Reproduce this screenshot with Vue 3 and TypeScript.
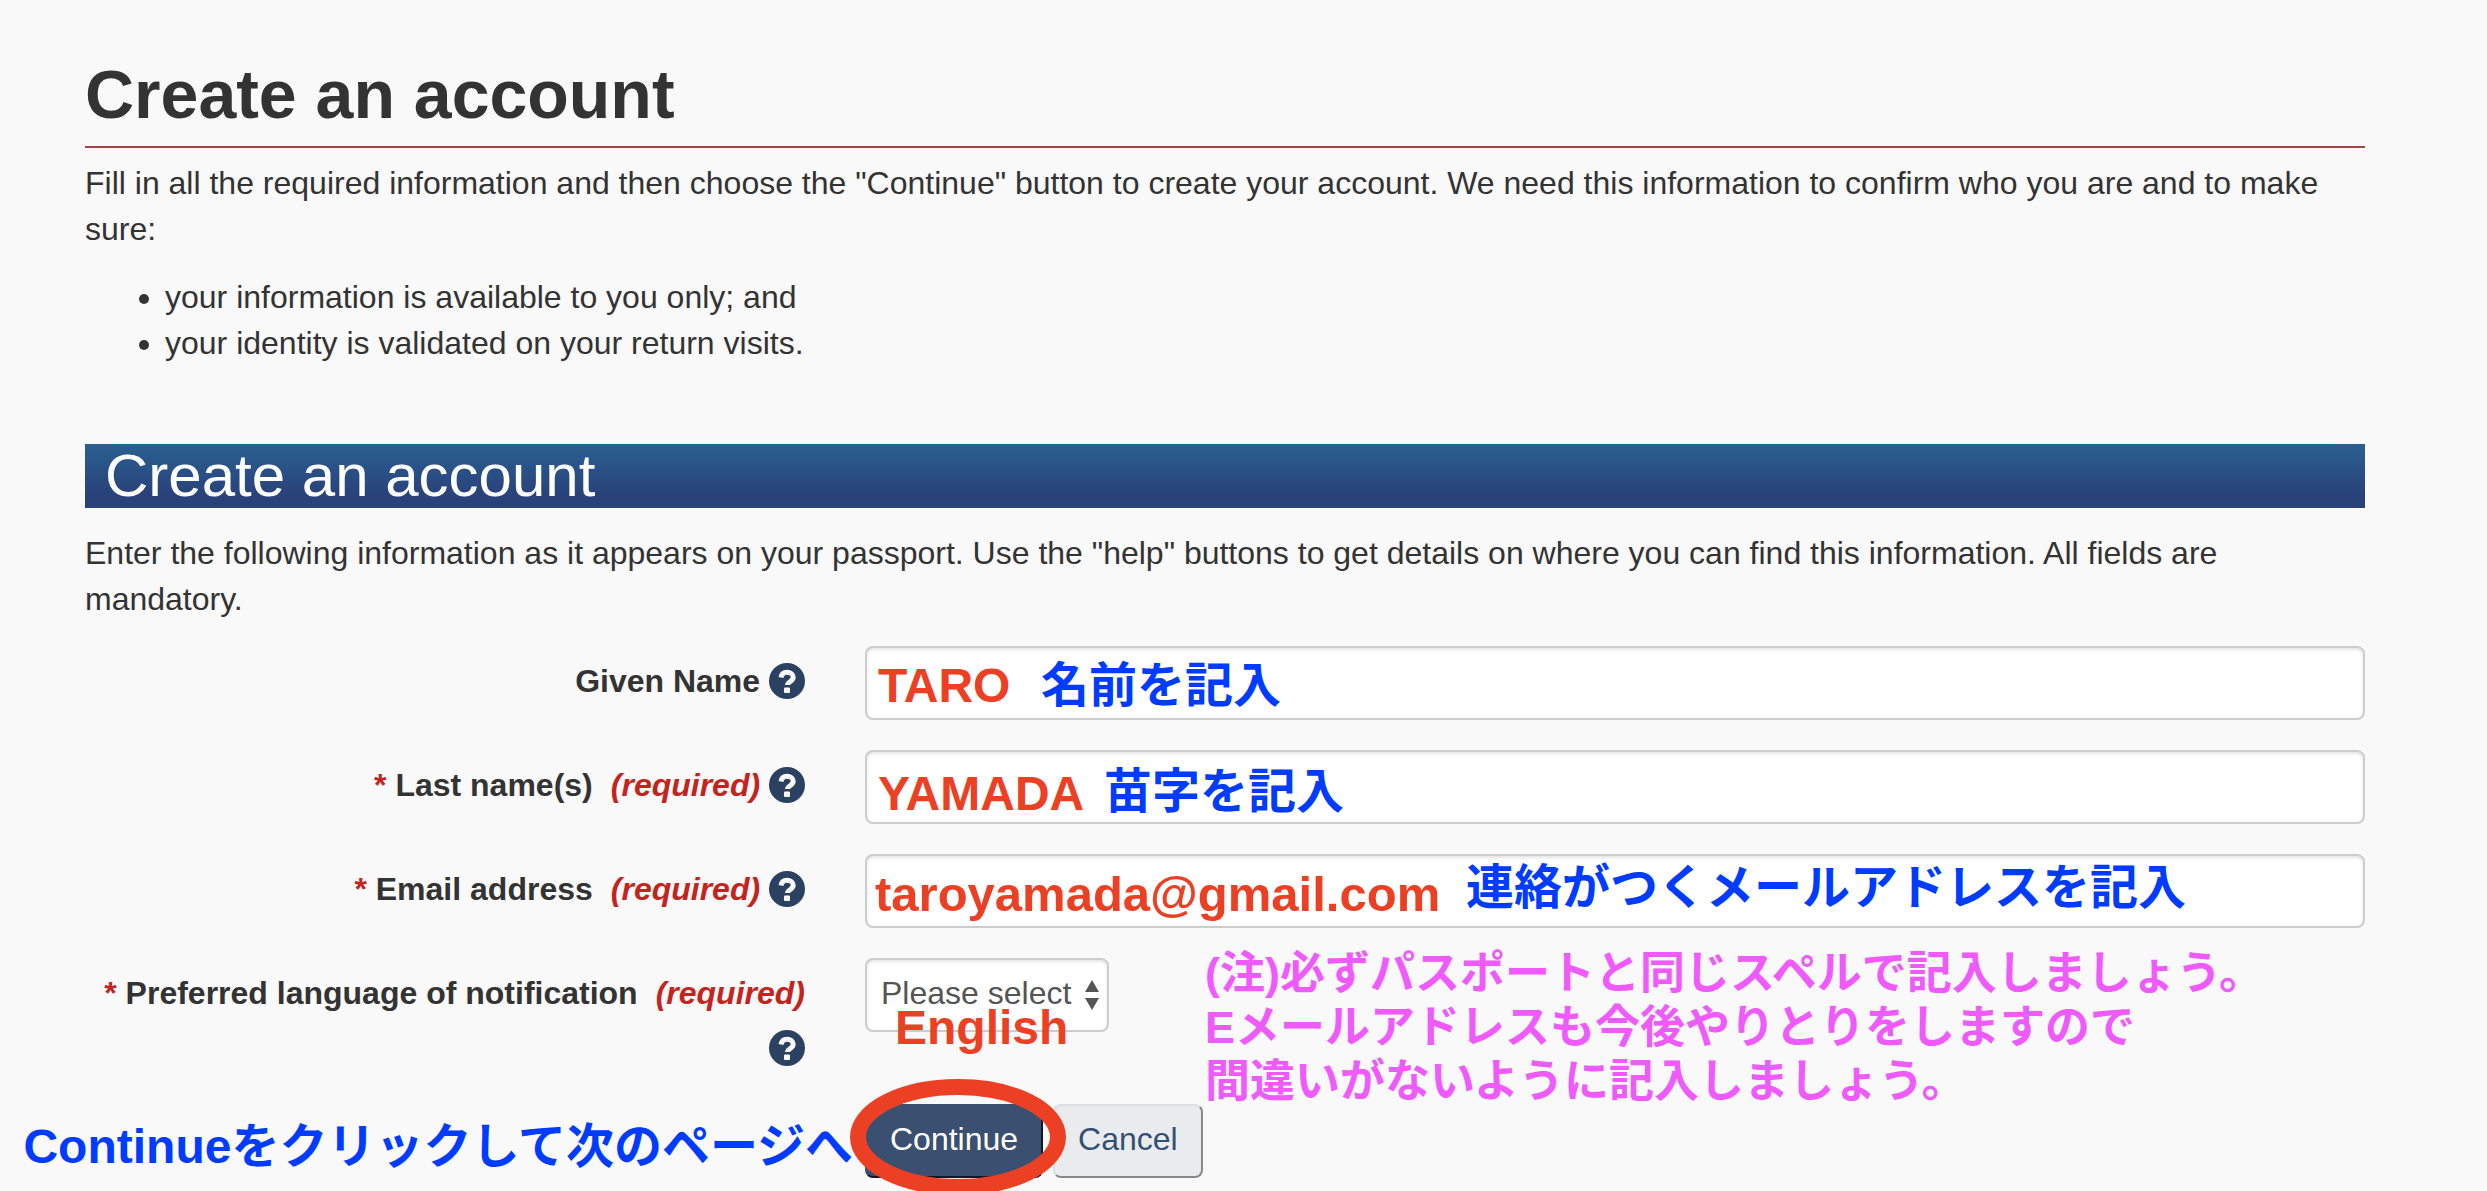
<script setup lang="ts">
import { ref } from 'vue'

interface Field {
  id: string
  label: string
  type: string
  required: boolean
  sample: string
  hint: string
}

const fields: Field[] = [
  { id: 'given', label: 'Given Name', type: 'text', required: false, sample: 'TARO', hint: '名前を記入' },
  { id: 'last', label: 'Last name(s)', type: 'text', required: true, sample: 'YAMADA', hint: '苗字を記入' },
  {
    id: 'email',
    label: 'Email address',
    type: 'email',
    required: true,
    sample: 'taroyamada@gmail.com',
    hint: '連絡がつくメールアドレスを記入',
  },
]

const language = ref('')
</script>

<template>
  <main class="page">
    <h1>Create an account</h1>
    <p class="intro">
      Fill in all the required information and then choose the "Continue" button to create your account. We need this
      information to confirm who you are and to make sure:
    </p>
    <ul class="reasons">
      <li>your information is available to you only; and</li>
      <li>your identity is validated on your return visits.</li>
    </ul>

    <h2>Create an account</h2>
    <p class="guide">
      Enter the following information as it appears on your passport. Use the "help" buttons to get details on where you
      can find this information. All fields are mandatory.
    </p>

    <form class="form" @submit.prevent>
      <div v-for="f in fields" :key="f.id" class="row">
        <div class="caption">
          <label :for="f.id"
            ><span v-if="f.required" class="star">* </span>{{ f.label
            }}<em v-if="f.required" class="required">(required)</em></label
          >&#32;<button type="button" class="help" :aria-label="'Help: ' + f.label">
            <svg viewBox="0 0 36 36" aria-hidden="true">
              <circle cx="18" cy="18" r="18" />
              <path d="M12 14.500c.6-3.600 3-5.300 6.100-5.300 3.400 0 6.100 2 6.100 5.100 0 4.500-5.700 4.300-5.700 7.700" />
              <rect x="15" y="24.500" width="6" height="5.500" rx="1" />
            </svg>
          </button>
        </div>
        <div class="control">
          <input :id="f.id" class="box" :type="f.type" />
          <span class="note sample" :class="'sample-' + f.id">{{ f.sample }}</span>
          <span class="note hint" :class="'hint-' + f.id">{{ f.hint }}</span>
        </div>
      </div>

      <div class="row">
        <div class="caption tall">
          <label for="language"
            ><span class="star">* </span>Preferred language of notification<em class="required">(required)</em></label
          >&#32;<button type="button" class="help" aria-label="Help: Preferred language of notification">
            <svg viewBox="0 0 36 36" aria-hidden="true">
              <circle cx="18" cy="18" r="18" />
              <path d="M12 14.500c.6-3.600 3-5.300 6.100-5.300 3.400 0 6.100 2 6.100 5.100 0 4.500-5.700 4.300-5.700 7.700" />
              <rect x="15" y="24.500" width="6" height="5.500" rx="1" />
            </svg>
          </button>
        </div>
        <div class="control">
          <div class="picker">
            <select id="language" v-model="language" class="box">
              <option value="">Please select</option>
              <option value="en">English</option>
            </select>
            <svg class="arrows" viewBox="0 0 14 30" aria-hidden="true">
              <path d="M7 0l7 12H0z" />
              <path d="M7 30L0 18h14z" />
            </svg>
          </div>
          <span class="note sample sample-language">English</span>
          <p class="note warning">
            (注)必ずパスポートと同じスペルで記入しましょう。<br />Eメールアドレスも今後やりとりをしますので<br />間違いがないように記入しましょう。
          </p>
        </div>
      </div>

      <div class="row">
        <div class="control actions">
          <span class="note hint hint-next">Continueをクリックして次のページへ</span>
          <button type="submit" class="btn primary">Continue</button>
          <button type="button" class="btn">Cancel</button>
          <svg class="ring" viewBox="0 0 216 116" aria-hidden="true">
            <ellipse cx="108" cy="58" rx="100" ry="50" />
          </svg>
        </div>
      </div>
    </form>
  </main>
</template>

<style>
body {
  margin: 0;
  background: #f9f9f9;
}
</style>

<style scoped>
.page {
  box-sizing: border-box;
  min-height: 100vh;
  overflow: hidden;
  padding: 54px 122px 0 85px;
  color: #333;
  font: 32px/46px "Liberation Sans", Arial, "Noto Sans CJK JP", sans-serif;
}

h1 {
  margin: 0 0 12px;
  padding-bottom: 12px;
  border-bottom: 2px solid #a34346;
  font-size: 68px;
  line-height: 80px;
}

.intro {
  margin: 0 0 22px;
}

.reasons {
  margin: 0 0 78px;
  padding-left: 80px;
}

h2 {
  margin: 0 0 22px;
  padding-left: 20px;
  background: linear-gradient(#2b6091, #29578a 25%, #29447b 75%, #294178);
  color: #fff;
  font-size: 60px;
  font-weight: 400;
  line-height: 64px;
}

.guide {
  margin: 0 0 24px;
}

.form {
  display: flex;
  flex-direction: column;
  gap: 30px;
}

.row {
  display: grid;
  grid-template-columns: repeat(12, 1fr);
  column-gap: 60px;
}

.caption {
  box-sizing: border-box;
  grid-column: 1 / span 4;
  height: 74px;
  padding-top: 8px;
  font-weight: 700;
  line-height: 55px;
  text-align: right;
}

.tall {
  height: 116px;
}

.star,
.required {
  color: #c3251e;
}

.required {
  margin-left: 18px;
}

.help {
  width: 36px;
  height: 36px;
  padding: 0;
  border: 0;
  background: none;
  line-height: 0;
  vertical-align: -7px;
}

.help svg {
  display: block;
  width: 36px;
  height: 36px;
  fill: #2b4162;
}

.help path {
  fill: none;
  stroke: #f9f9f9;
  stroke-width: 5;
}

.help rect {
  fill: #f9f9f9;
}

.control {
  position: relative;
  grid-column: 5 / span 8;
}

.box {
  box-sizing: border-box;
  display: block;
  width: 100%;
  height: 74px;
  padding: 0 16px 4px;
  border: 2px solid #ccc;
  border-radius: 8px;
  background: #fff;
  box-shadow: inset 0 2px 3px rgba(0, 0, 0, 0.1);
  color: #555;
  font: inherit;
}

.picker {
  position: relative;
  width: 244px;
}

.picker .box {
  padding-left: 14px;
  appearance: none;
}

.arrows {
  position: absolute;
  top: 22px;
  right: 10px;
  width: 14px;
  height: 30px;
  fill: #555;
  pointer-events: none;
}

.note {
  position: absolute;
  margin: 0;
  font-weight: 700;
  font-size: 48px;
  line-height: 54px;
  white-space: nowrap;
  pointer-events: none;
}

.sample {
  left: 13px;
  color: #ec4025;
}

.hint {
  color: #003cff;
}

.sample-given,
.sample-email {
  top: 13px;
}

.sample-last {
  top: 17px;
}

.sample-email {
  left: 10px;
  font-size: 49px;
}

.sample-language {
  top: 43px;
  left: 30px;
}

.hint-given {
  top: 13px;
  left: 176px;
}

.hint-last {
  top: 15px;
  left: 239px;
}

.hint-email {
  top: 7px;
  left: 601px;
}

.warning {
  top: -11px;
  left: 340px;
  color: #ef5afc;
  font-size: 45px;
}

.hint-next {
  top: 16px;
  right: 100%;
  margin-right: 12px;
}

.actions {
  display: flex;
  gap: 10px;
}

.btn {
  height: 74px;
  padding: 0 23px 4px;
  border: 2px solid;
  border-color: #dcdee1 #888 #888 #dcdee1;
  border-radius: 8px;
  background: #eaebed;
  color: #335075;
  font: inherit;
}

.primary {
  border-color: #3b4f70 #101828 #101828 #3b4f70;
  background: #3b4f70;
  color: #fff;
}

.ring {
  position: absolute;
  top: -25px;
  left: -15px;
  width: 216px;
  height: 116px;
  fill: none;
  stroke: #ec4025;
  stroke-width: 16;
  pointer-events: none;
}
</style>
